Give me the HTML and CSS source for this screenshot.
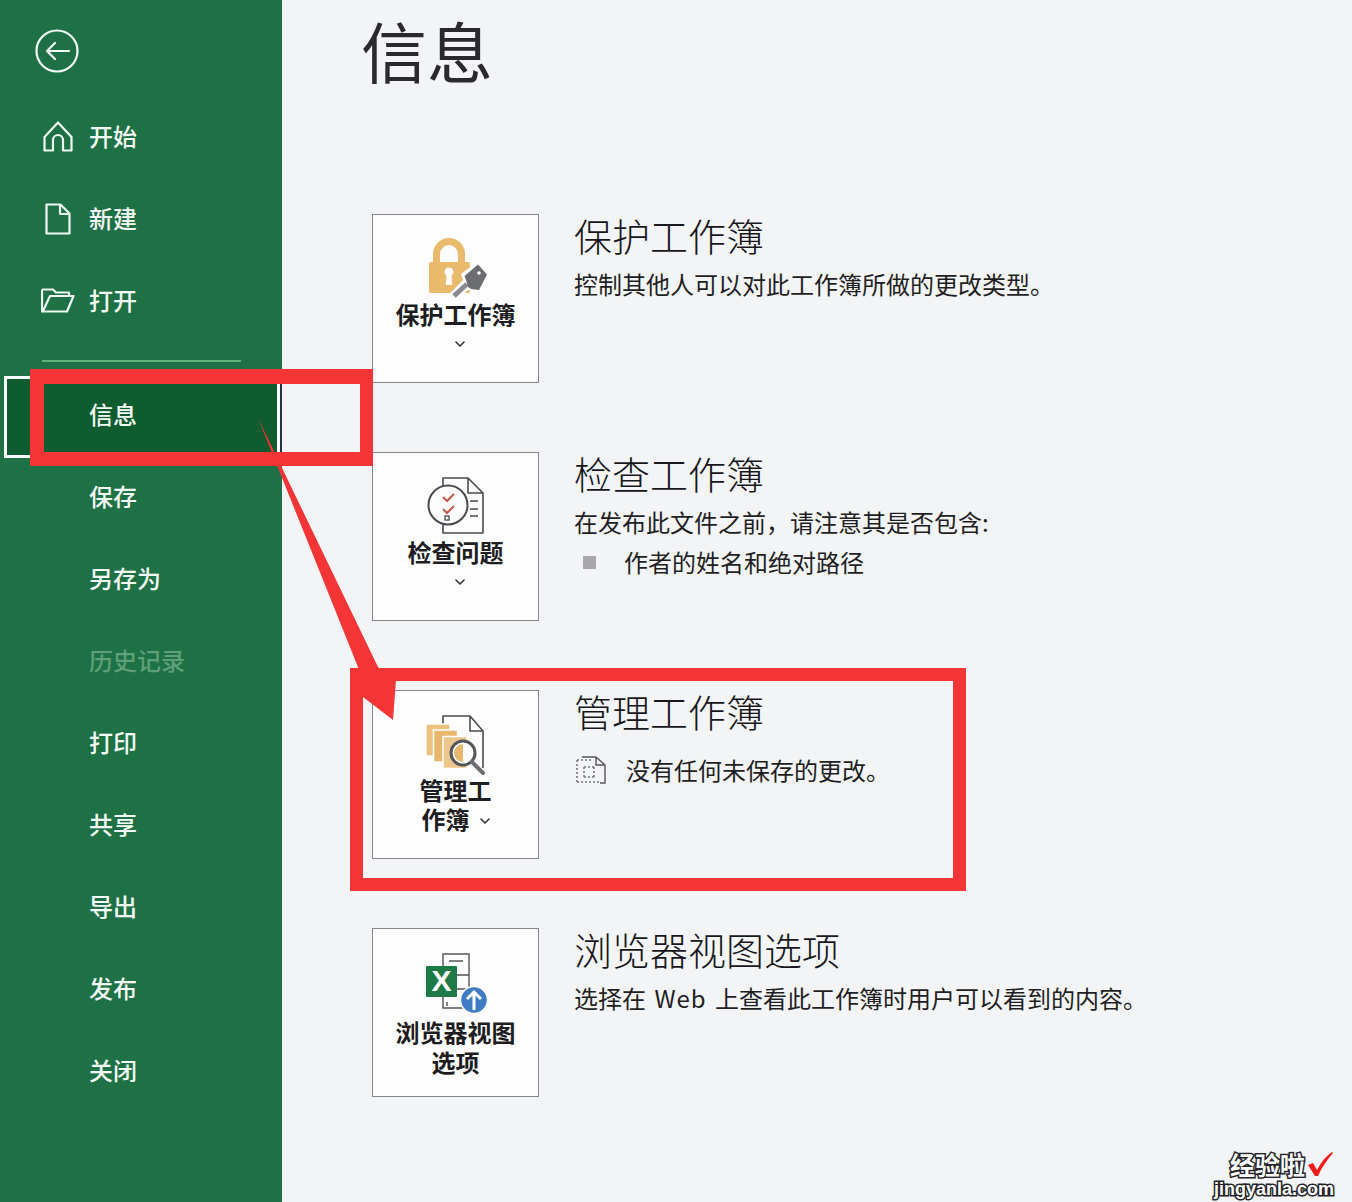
FILE: index.html
```html
<!DOCTYPE html>
<html lang="zh-CN">
<head>
<meta charset="utf-8">
<title>信息</title>
<link rel="stylesheet" href="styles.css">
</head>
<body>
<div class="app">
  <aside class="sidebar">
    <div class="back">
      <svg class="back-icon" viewBox="0 0 44 44" width="44" height="44"><circle cx="22" cy="22" r="20.5"/><path d="M34 22H12.500M20 14l-8 8 8 8"/></svg>
    </div>
    <nav>
      <a class="nav-item"><span class="nav-slot"><svg class="nav-icon" viewBox="0 0 34 34" width="34" height="34"><path d="M3.500 18 17 3.500 30.500 18v13.500H22V21a5 5 0 0 0-10 0v10.500H3.500Z"/></svg></span>开始</a>
      <a class="nav-item"><span class="nav-slot"><svg class="nav-icon" viewBox="0 0 34 34" width="34" height="34"><path d="M5.500 3.500h14l9 9v20h-23ZM19 4v9h9"/></svg></span>新建</a>
      <a class="nav-item"><span class="nav-slot"><svg class="nav-icon" viewBox="0 0 34 34" width="34" height="34"><path d="M1 6.500h11l3 3h13v3M1 6.500v22h25l6.500-15.500H9L2 28"/></svg></span>打开</a>
      <div class="divider"></div>
      <a class="nav-item active"><span class="nav-slot"></span>信息</a>
      <a class="nav-item"><span class="nav-slot"></span>保存</a>
      <a class="nav-item"><span class="nav-slot"></span>另存为</a>
      <a class="nav-item disabled"><span class="nav-slot"></span>历史记录</a>
      <a class="nav-item"><span class="nav-slot"></span>打印</a>
      <a class="nav-item"><span class="nav-slot"></span>共享</a>
      <a class="nav-item"><span class="nav-slot"></span>导出</a>
      <a class="nav-item"><span class="nav-slot"></span>发布</a>
      <a class="nav-item"><span class="nav-slot"></span>关闭</a>
    </nav>
  </aside>

  <main class="content">
    <h1 class="page-title">信息</h1>

    <section class="row">
      <div class="card">
        <svg class="card-icon" viewBox="406 237 100 62" width="100" height="62">
          <path class="lock" d="M433 262v-8a16 16 0 0 1 32 0v8h3a2 2 0 0 1 2 2v27a2 2 0 0 1-2 2h-37a2 2 0 0 1-2-2v-27a2 2 0 0 1 2-2ZM440 262h18v-8a9 9 0 0 0-18 0Z" fill-rule="evenodd"/>
          <path class="keyhole" d="M449 267.500a4.500 4.500 0 0 1 2.500 8.200l.8 9.300h-6.600l.8-9.300a4.500 4.500 0 0 1 2.500-8.200Z"/>
          <path class="key-gap" d="M450 299l-1-5 14-14-2-6 16-12 13 14-12 16-10-2-11 10Z"/>
          <path class="key-shaft" d="M467 284l-13 12"/>
          <path class="key" d="M478 264.500l9 10-8 15.500-8-1-3-2-1-4-2.500-7Z"/>
          <circle class="key-hole" cx="479" cy="273" r="1.800"/>
        </svg>
        <div class="card-label">保护工作簿</div>
        <div class="card-label chevron-line"><svg class="chevron" viewBox="0 0 10 6" width="10" height="6"><path d="M1 1l4 4 4-4"/></svg></div>
      </div>
      <div class="text">
        <h2 class="row-title">保护工作簿</h2>
        <p class="row-desc">控制其他人可以对此工作簿所做的更改类型。</p>
      </div>
    </section>

    <section class="row">
      <div class="card">
        <svg class="card-icon" viewBox="406 475 100 62" width="100" height="62">
          <path class="outline" d="M443 486v-8h25l15 15v40h-40v-9M468 478v15h15M470 501h8M470 509h8M470 516h8"/>
          <circle class="outline-fill" cx="448" cy="505" r="19.500"/>
          <path class="tick" d="M443 497l4 4 7-7M443 509l4 4 7-7"/>
          <rect class="outline-thin" x="445" y="516" width="4" height="4"/>
        </svg>
        <div class="card-label">检查问题</div>
        <div class="card-label chevron-line"><svg class="chevron" viewBox="0 0 10 6" width="10" height="6"><path d="M1 1l4 4 4-4"/></svg></div>
      </div>
      <div class="text">
        <h2 class="row-title">检查工作簿</h2>
        <p class="row-desc">在发布此文件之前，请注意其是否包含:</p>
        <div class="bullet-row"><span class="bullet"></span><span>作者的姓名和绝对路径</span></div>
      </div>
    </section>

    <section class="row">
      <div class="card">
        <svg class="card-icon" viewBox="406 713 100 62" width="100" height="62">
          <path class="outline" d="M443 724v-8h27l13 15v37M470 716v15h13"/>
          <rect class="page-a" x="426" y="724" width="24" height="32"/>
          <rect class="page-b" x="433.500" y="730" width="24" height="32"/>
          <rect class="page-c" x="443" y="736.500" width="24" height="32"/>
          <circle class="lens" cx="463" cy="753" r="12"/>
          <path class="lens-half" d="M463 744a9 9 0 0 0 0 18Z"/>
          <path class="handle" d="M472 762l11 11"/>
        </svg>
        <div class="card-label">管理工</div>
        <div class="card-label">作簿<svg class="chevron inline" viewBox="0 0 10 6" width="10" height="6"><path d="M1 1l4 4 4-4"/></svg></div>
      </div>
      <div class="text">
        <h2 class="row-title">管理工作簿</h2>
        <div class="status-row">
          <svg class="status-icon" viewBox="0 0 30 28" width="30" height="28"><path class="status-dots" d="M1 4h16M1 4v22M1 26h24M8 11v10M8 11h10M8 21h10M18 11v10"/><path class="status-line" d="M20 1l9 8v18h-5M20 1H6M20 1v8h9"/></svg>
          <span>没有任何未保存的更改。</span>
        </div>
      </div>
    </section>

    <section class="row">
      <div class="card card-wide">
        <svg class="card-icon" viewBox="406 951 100 62" width="100" height="62">
          <path class="outline-thin" d="M443 954h26v54h-26ZM449 961h14M457 975h12M457 989h12M447 1002v4"/>
          <rect class="xl" x="426" y="966" width="31" height="31" rx="1"/>
          <text class="xl-text" x="441.500" y="991">X</text>
          <circle class="up" cx="474" cy="1000" r="13.500"/>
          <path class="up-arrow" d="M474 1010v-17M467 999l7-7 7 7"/>
        </svg>
        <div class="card-label">浏览器视图</div>
        <div class="card-label card-label-last">选项</div>
      </div>
      <div class="text">
        <h2 class="row-title">浏览器视图选项</h2>
        <p class="row-desc">选择在 <span class="latin">Web</span> 上查看此工作簿时用户可以看到的内容。</p>
      </div>
    </section>
  </main>
</div>

<div class="mark mark-info"></div>
<div class="mark mark-manage"></div>
<svg class="mark-arrow" viewBox="0 0 1352 1202" width="1352" height="1202"><path d="M258 418 378 667 396 680 393 720 363 697 358 667Z"/></svg>

<div class="watermark">
  <div class="wm-top">经验啦<svg class="wm-check" viewBox="0 0 28 26" width="28" height="26"><path d="M2 14l5-2 4 7C15 11 20 5 26 1l1 1C21 9 16 16 12 25h-3Z"/></svg></div>
  <div class="wm-bottom">jingyanla.com</div>
</div>
</body>
</html>
```

FILE: styles.css
```css
* { box-sizing: border-box; }
html, body { margin: 0; padding: 0; }
body {
  position: relative;
  width: 1352px;
  height: 1202px;
  overflow: hidden;
  background: #f3f4f6;
  font-family: "Noto Sans CJK SC", "Noto Sans", sans-serif;
  color: #1f1f23;
}
.app { display: flex; height: 1202px; }

/* sidebar */
.sidebar { flex: none; width: 282px; background: #1e7145; color: #f4faf6; }
.back { height: 98px; padding: 29px 0 0 35px; }
.back-icon { display: block; fill: none; stroke: #f4faf6; stroke-width: 2.200; stroke-linecap: round; stroke-linejoin: round; }
.nav-item {
  display: flex;
  align-items: center;
  height: 82px;
  padding: 0 0 6px 41px;
  font-size: 24px;
  line-height: 30px;
  font-weight: 500;
}
.nav-slot { flex: none; width: 48px; display: flex; }
.nav-icon { fill: none; stroke: #effaf2; stroke-width: 2.200; stroke-linejoin: round; }
.divider { height: 2px; width: 199px; margin: 16px 0 14px 42px; background: #62b27a; }
.active {
  width: 276px;
  margin-left: 4px;
  padding-left: 34px;
  background: #0e5c2f;
  border: 3px solid #fff;
  box-shadow: 2px 0 0 #26304a;
}
.disabled { color: #5f9f7a; }

/* content */
.content { flex: 1; padding: 0 0 0 90px; }
.page-title {
  height: 214px;
  margin: 0 0 0 -11px;
  padding-top: 7px;
  font-size: 66px;
  line-height: 84px;
  font-weight: 400;
  color: #2a2a2e;
}
.row { display: flex; height: 169px; margin-bottom: 69px; }
.card {
  flex: none;
  width: 167px;
  height: 169px;
  padding-top: 22px;
  background: #fdfdfd;
  border: 1px solid #85858c;
  display: flex;
  flex-direction: column;
  align-items: center;
}
.card-wide .card-icon { margin-bottom: 4px; }
.card-icon { flex: none; display: block; overflow: visible; margin-bottom: 0; }
.card-label {
  height: 29px;
  font-size: 24px;
  line-height: 29px;
  font-weight: 700;
  color: #1d1d22;
  white-space: nowrap;
}
.card-label-last { margin-top: 1px; }
.chevron-line { display: flex; align-items: center; padding-left: 8px; margin-top: 1px; }
.chevron { fill: none; stroke: #333; stroke-width: 1.600; stroke-linecap: round; stroke-linejoin: round; display: block; }
.chevron.inline { display: inline-block; margin: 0 0 2px 10px; vertical-align: middle; }

.lock { fill: #e9b96c; }
.keyhole { fill: #fdfdfd; }
.key-gap { fill: #fdfdfd; }
.key { fill: #6c6d71; }
.key-shaft { fill: none; stroke: #8b8c90; stroke-width: 5; }
.key-hole { fill: #fdfdfd; }
.outline { fill: none; stroke: #4a4a50; stroke-width: 1.600; stroke-linejoin: round; }
.outline-fill { fill: #fdfdfd; stroke: #4a4a50; stroke-width: 2; }
.outline-thin { fill: none; stroke: #55555a; stroke-width: 1.400; }
.tick { fill: none; stroke: #c2574a; stroke-width: 2; }
.page-a, .page-b, .page-c { stroke: #fdfdfd; stroke-width: 1.500; }
.page-a { fill: #eec27c; }
.page-b { fill: #e9b76c; }
.page-c { fill: #edc68c; }
.lens { fill: #fdfdfd; stroke: #55565a; stroke-width: 3; }
.lens-half { fill: #e9b76c; }
.handle { fill: none; stroke: #6d6e72; stroke-width: 4; stroke-linecap: round; }
.xl { fill: #1e7a46; }
.xl-text { fill: #fff; font-family: "Liberation Sans", sans-serif; font-weight: 700; font-size: 30px; text-anchor: middle; }
.up { fill: #3f7cc6; stroke: #fdfdfd; stroke-width: 1.500; }
.up-arrow { fill: none; stroke: #fff; stroke-width: 3; }

.text { padding: 0 0 0 35px; }
.row-title {
  margin: 0;
  height: 46px;
  font-size: 38px;
  line-height: 42px;
  font-weight: 300;
  color: #17171b;
}
.row-desc {
  margin: 0;
  font-size: 24px;
  line-height: 48px;
  font-weight: 400;
  white-space: nowrap;
}
.latin { margin: 0 3px; letter-spacing: 1px; }
.bullet-row {
  display: flex;
  align-items: center;
  height: 32px;
  font-size: 24px;
  line-height: 32px;
  padding-left: 9px;
}
.bullet { flex: none; width: 13px; height: 13px; margin-right: 28px; background: #a8a8aa; }
.status-row {
  display: flex;
  align-items: center;
  margin-top: 10px;
  height: 48px;
  font-size: 24px;
  line-height: 32px;
  padding-left: 2px;
}
.status-icon { flex: none; margin-right: 20px; fill: none; }
.status-line { fill: none; stroke: #55555a; stroke-width: 1.400; }
.status-dots { fill: none; stroke: #77777c; stroke-width: 1.600; stroke-dasharray: 2 2; }

/* annotations over the screenshot */
.mark { position: absolute; border-style: solid; border-color: #f43535; background: transparent; }
.mark-info { left: 30px; top: 369px; width: 343px; height: 97px; border-width: 15px 13px 14px 14px; }
.mark-manage { left: 350px; top: 668px; width: 616px; height: 223px; border-width: 13px 13px 13px 13px; }
.mark-arrow { position: absolute; left: 0; top: 0; fill: #f43535; pointer-events: none; }

/* watermark */
.watermark {
  position: absolute;
  left: 1214px;
  top: 1149px;
  width: 124px;
  font-weight: 700;
  color: #fff;
  -webkit-text-stroke: 3px #24242a;
  paint-order: stroke fill;
}
.wm-top { display: flex; align-items: center; padding-left: 16px; height: 30px; font-size: 25px; line-height: 30px; white-space: nowrap; }
.wm-check { flex: none; margin: 0 0 0 1px; fill: #f01a1a; stroke: none; }
.wm-bottom { font-family: "Liberation Sans", sans-serif; font-size: 18px; line-height: 20px; white-space: nowrap; letter-spacing: 0; }
```
